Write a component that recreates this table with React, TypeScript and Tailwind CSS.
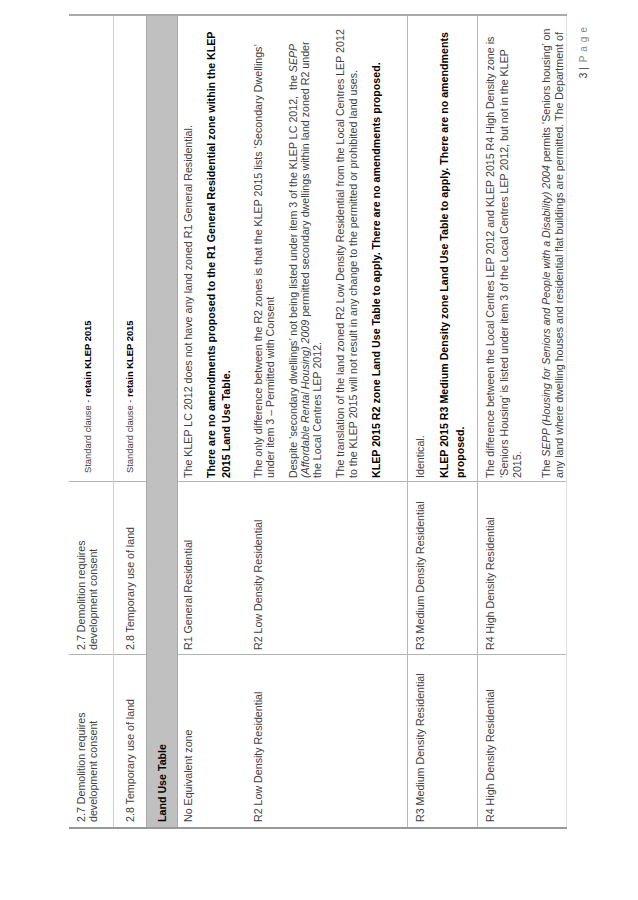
import type { ReactNode } from "react";

function Row({
  height,
  border,
  top = "pt-[6px]",
  notesClass = "pl-[3px] pt-[6px]",
  lead,
  zone,
  notes,
}: {
  height: string;
  border: string;
  top?: string;
  notesClass?: string;
  lead: ReactNode;
  zone: ReactNode;
  notes: ReactNode;
}) {
  return (
    <div
      className={`grid grid-cols-[172px_173px_466px] overflow-hidden text-[10.67px] leading-[12.3px] ${height} ${border}`}
    >
      <div className={`pl-[5px] ${top}`}>{lead}</div>
      <div className={`border-l border-[#b3b3b3] pl-[4px] ${top}`}>{zone}</div>
      <div className={`border-l border-[#b3b3b3] whitespace-nowrap ${notesClass}`}>{notes}</div>
    </div>
  );
}

function Bold({ children }: { children: ReactNode }) {
  return <span className="font-bold text-black">{children}</span>;
}

export default function App() {
  return (
    <div className="relative h-[900px] w-[638px] overflow-hidden bg-white">
      {/* the page is printed sideways: lay it out upright, then turn it */}
      <div className="h-[638px] w-[900px] origin-top-left [transform:translateY(900px)_rotate(-90deg)] pl-[71px] pt-[69px] font-['Liberation_Sans',Arial,sans-serif] text-[#404040]">
        <div className="w-[815px] border-l-2 border-r-2 border-l-[#999] border-r-[#aaa]">
          <Row
            height="h-[45px]"
            border="border-b border-[#cfcfcf]"
            notesClass="pl-[8px] pt-[13px] text-[9.4px]"
            lead={
              <>
                2.7 Demolition requires
                <br />
                development consent
              </>
            }
            zone={
              <>
                2.7 Demolition requires
                <br />
                development consent
              </>
            }
            notes={
              <>
                Standard clause - <Bold>retain KLEP 2015</Bold>
              </>
            }
          />
          <Row
            height="h-[32px]"
            border=""
            top="pt-[10px]"
            notesClass="pl-[8px] pt-[10px] text-[9.4px]"
            lead="2.8 Temporary use of land"
            zone="2.8 Temporary use of land"
            notes={
              <>
                Standard clause - <Bold>retain KLEP 2015</Bold>
              </>
            }
          />

          <div className="flex h-[32px] items-center border-y border-[#a8a8a8] bg-[#c0c0c0] pl-[5px] text-[10.67px]">
            <Bold>Land Use Table</Bold>
          </div>

          <Row
            height="h-[68px]"
            border=""
            top="pt-[4px]"
            notesClass="pl-[3px] pt-[4px]"
            lead="No Equivalent zone"
            zone="R1 General Residential"
            notes={
              <>
                <p>The KLEP LC 2012 does not have any land zoned R1 General Residential.</p>
                <p className="mt-[10px] leading-[15px]">
                  <Bold>
                    There are no amendments proposed to the R1 General Residential zone within the KLEP
                    <br />
                    2015 Land Use Table.
                  </Bold>
                </p>
              </>
            }
          />
          <Row
            height="h-[162px]"
            border="border-b border-[#b8b8b8]"
            lead="R2 Low Density Residential"
            zone="R2 Low Density Residential"
            notes={
              <>
                <p>
                  The only difference between the R2 zones is that the KLEP 2015 lists ‘Secondary Dwellings’
                  <br />
                  under item 3 – Permitted with Consent
                </p>
                <p className="mt-[10px]">
                  Despite ‘secondary dwellings’ not being listed under item 3 of the KLEP LC 2012,&nbsp; the{" "}
                  <i>SEPP</i>
                  <br />
                  <i>(Affordable Rental Housing) 2009</i> permitted secondary dwellings within land zoned R2 under
                  <br />
                  the Local Centres LEP 2012.
                </p>
                <p className="mt-[11px]">
                  The translation of the land zoned R2 Low Density Residential from the Local Centres LEP 2012
                  <br />
                  to the KLEP 2015 will not result in any change to the permitted or prohibited land uses.
                </p>
                <p className="mt-[11px]">
                  <Bold>KLEP 2015 R2 zone Land Use Table to apply. There are no amendments proposed.</Bold>
                </p>
              </>
            }
          />
          <Row
            height="h-[70px]"
            border="border-b border-[#b8b8b8]"
            lead="R3 Medium Density Residential"
            zone="R3 Medium Density Residential"
            notes={
              <>
                <p>Identical.</p>
                <p className="mt-[10px] leading-[16px]">
                  <Bold>
                    KLEP 2015 R3 Medium Density zone Land Use Table to apply. There are no amendments
                    <br />
                    proposed.
                  </Bold>
                </p>
              </>
            }
          />
          <Row
            height="h-[89px]"
            border="border-b border-[#e2e2e2]"
            lead="R4 High Density Residential"
            zone="R4 High Density Residential"
            notes={
              <>
                <p className="leading-[13.5px]">
                  The difference between the Local Centres LEP 2012 and KLEP 2015 R4 High Density zone is
                  <br />
                  ‘Seniors Housing’ is listed under item 3 of the Local Centres LEP 2012, but not in the KLEP
                  <br />
                  2015.
                </p>
                <p className="mt-[15px] leading-[13px]">
                  The <i>SEPP (Housing for Seniors and People with a Disability) 2004</i> permits ‘Seniors housing’ on
                  <br />
                  any land where dwelling houses and residential flat buildings are permitted. The Department of
                </p>
              </>
            }
          />
        </div>

        <div className="mt-[9px] flex justify-end pr-[23px] text-[10px]">
          <span className="text-[#333]">3 |</span>
          <span className="ml-[5px] tracking-[4px] text-[#8a8a8a]">Page</span>
        </div>
      </div>
    </div>
  );
}
